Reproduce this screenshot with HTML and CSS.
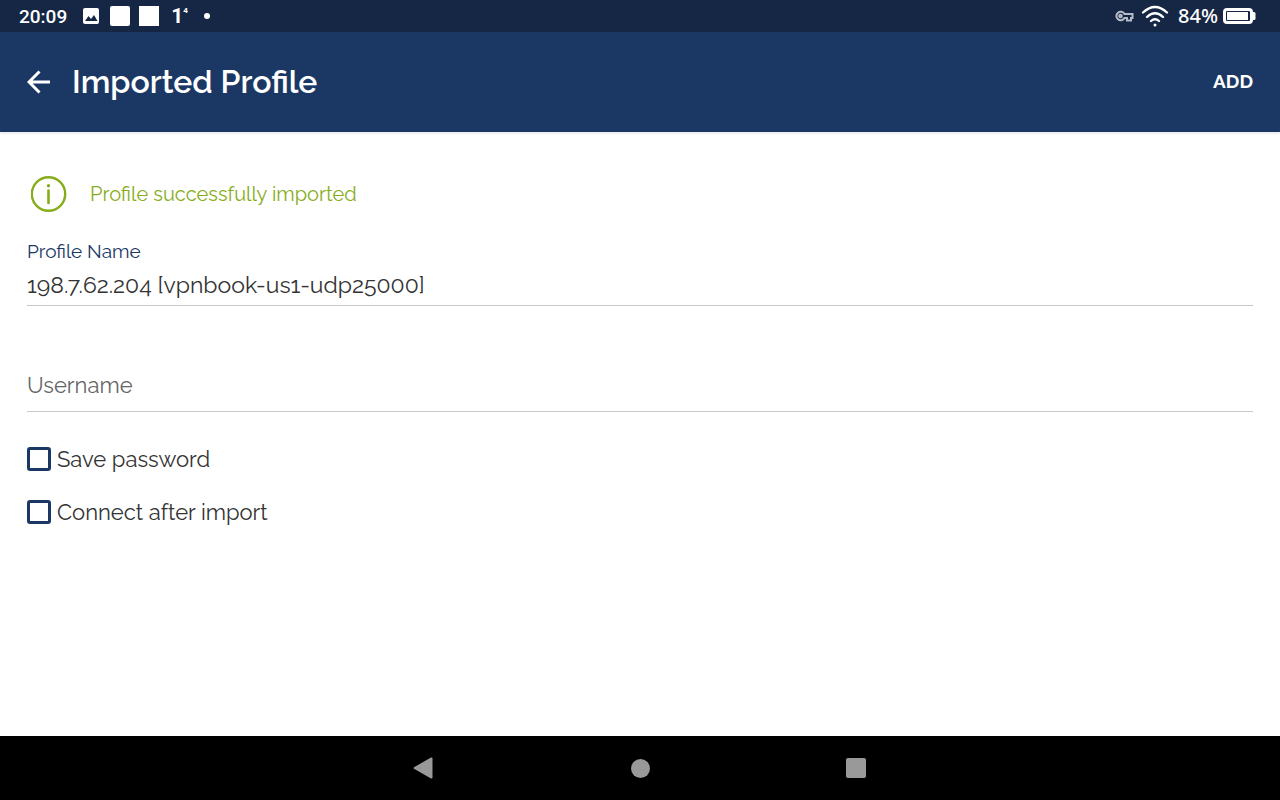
FILE: index.html
```html
<!DOCTYPE html>
<html lang="en">
  <head>
    <meta charset="UTF-8" />
    <meta name="viewport" content="width=device-width, initial-scale=1.0" />
    <title>Imported Profile</title>
    <link rel="stylesheet" href="styles.css">
  </head>
  <body>
    <div class="status-bar">
      <div class="status-left">
        <span class="clock">20:09</span>
        <svg class="picture-icon" width="16" height="16" viewBox="0 0 16 16">
          <rect width="16" height="16" rx="2" fill="#fff" />
          <path d="M2 13l3.500-5 2.500 3 3-4 3.500 6z" fill="#152744" />
        </svg>
        <span class="block rounded"></span>
        <span class="block"></span>
        <span class="counter">1<sup>4</sup></span>
        <span class="dot"></span>
      </div>
      <div class="status-right">
        <svg width="19" height="12" viewBox="0 0 19 12" fill="none" stroke="#b5bcc8" stroke-width="2">
          <path d="M9.500 4A4.300 4.300 0 1 0 9.500 8H12v2.500h4V8h1.500V4z" />
          <circle cx="5.500" cy="6" r="1.300" />
        </svg>
        <svg class="wifi-icon" width="28" height="22" viewBox="0 0 28 22" fill="none" stroke="#fff" stroke-width="2.300" stroke-linecap="round">
          <path d="M2 7.500Q14-3.500 26 7.500M6 12Q14 4.500 22 12M10 16Q14 12.500 18 16" />
          <circle cx="14" cy="20" r="1.500" fill="#fff" stroke="none" />
        </svg>
        <span class="battery-level">84%</span>
        <svg width="33" height="16" viewBox="0 0 33 16">
          <rect x="1.500" y="1.500" width="27" height="13" rx="2.500" fill="none" stroke="#fff" stroke-width="3" />
          <rect x="4" y="4" width="21" height="8" fill="#fff" />
          <path d="M30 4h1a1.500 1.500 0 0 1 1.500 1.500v5A1.500 1.500 0 0 1 31 12h-1z" fill="#fff" />
        </svg>
      </div>
    </div>

    <header class="app-bar">
      <button class="back-btn" type="button" aria-label="Back">
        <svg width="24" height="24" viewBox="0 0 24 24" fill="none" stroke="#fff" stroke-width="3">
          <path d="M23 12H2M12.500 1.500L2 12l10.500 10.500" />
        </svg>
      </button>
      <h1>Imported Profile</h1>
      <button class="add-btn" type="submit" form="profile-form">ADD</button>
    </header>

    <main>
      <div class="notice">
        <svg width="36" height="36" viewBox="0 0 36 36">
          <circle cx="17.500" cy="18" r="16.700" fill="none" stroke="#86ad1b" stroke-width="2.400" />
          <circle cx="17.500" cy="9.700" r="1.700" fill="#86ad1b" />
          <path d="M17.500 14.500v12.500" stroke="#86ad1b" stroke-width="2.600" stroke-linecap="round" />
        </svg>
        <span>Profile successfully imported</span>
      </div>

      <form id="profile-form">
        <div class="field">
          <label for="profile-name">Profile Name</label>
          <input type="text" id="profile-name" value="198.7.62.204 [vpnbook-us1-udp25000]" />
        </div>
        <div class="field">
          <input type="text" id="username" placeholder="Username" aria-label="Username" />
        </div>
        <label class="check">
          <input type="checkbox" id="save-password" />
          <span>Save password</span>
        </label>
        <label class="check">
          <input type="checkbox" id="connect-after" />
          <span>Connect after import</span>
        </label>
      </form>
    </main>

    <nav class="nav-bar">
      <button type="button" aria-label="Back">
        <svg width="22" height="22" viewBox="0 0 22 22" fill="#999">
          <path d="M1 10.200L18 .600Q19.500 0 19.500 1.500V20.500Q19.500 22 18 21.400L1 11.800Q0 11 1 10.200z" />
        </svg>
      </button>
      <button type="button" aria-label="Home">
        <svg width="20" height="20" viewBox="0 0 20 20" fill="#999">
          <circle cx="10.500" cy="10.500" r="9.500" />
        </svg>
      </button>
      <button type="button" aria-label="Recent apps">
        <svg width="20" height="20" viewBox="0 0 20 20" fill="#999">
          <rect width="20" height="20" rx="2" />
        </svg>
      </button>
    </nav>
  </body>
</html>
```
FILE: styles.css
```css
* {
  box-sizing: border-box;
}
body {
  margin: 0;
  min-height: 100vh;
  display: flex;
  flex-direction: column;
  font-family: Raleway, Lato, sans-serif;
  color: #333;
  background-color: #fff;
}
button {
  padding: 0;
  border: none;
  background: none;
  color: inherit;
  font-family: inherit;
  cursor: pointer;
}
svg {
  display: block;
}

/* status bar */
.status-bar {
  display: flex;
  justify-content: space-between;
  align-items: center;
  height: 32px;
  padding: 0 24px 0 19px;
  background-color: #152744;
  color: #fff;
}
.status-left,
.status-right {
  display: flex;
  align-items: center;
}
.clock {
  font: 500 19px Roboto, sans-serif;
}
.picture-icon {
  margin: 0 11px 0 16px;
}
.block {
  width: 20px;
  height: 20px;
  margin-right: 9px;
  background-color: #fff;
}
.rounded {
  border-radius: 2px;
}
.counter {
  display: flex;
  margin: 0 16px 0 3px;
  font: 700 21px/22px Roboto, sans-serif;
}
.counter sup {
  font-size: 8px;
  line-height: 12px;
}
.dot {
  width: 6px;
  height: 6px;
  border-radius: 50%;
  background-color: #fff;
}
.wifi-icon {
  margin: 0 9px 0 7px;
}
.battery-level {
  margin-right: 5px;
  font: 500 20px/24px "Noto Sans", sans-serif;
}

/* app bar */
.app-bar {
  display: flex;
  align-items: center;
  height: 100px;
  padding: 0 27px;
  background-color: #1b3865;
  color: #fff;
  box-shadow: 0 1px 3px rgba(0, 0, 0, 0.12);
}
.app-bar h1 {
  flex: 1;
  margin: 0 0 0 21px;
  padding-bottom: 2px;
  font-size: 32px;
  font-weight: 600;
}
.add-btn {
  padding-bottom: 2px;
  font-size: 19px;
  font-weight: 700;
}

/* content */
main {
  flex: 1;
  padding: 44px 27px;
}
.notice {
  display: flex;
  align-items: center;
  gap: 23px;
  height: 36px;
  margin: 0 0 26px 4px;
  font-size: 20px;
  color: #86ad1b;
}
.field {
  margin-bottom: 54px;
}
.field + .check {
  margin-top: -19px;
}
.field label {
  display: block;
  margin-bottom: 2px;
  font-size: 19px;
  line-height: 26px;
  color: #1b3865;
}
.field input {
  display: block;
  width: 100%;
  height: 40px;
  padding: 0 0 2px;
  border: none;
  border-bottom: 1px solid #c8c8c8;
  outline: none;
  font-family: inherit;
  font-size: 23px;
  color: #333;
  background: none;
}
.field #username {
  height: 52px;
  font-size: 22px;
}
.field input::placeholder {
  color: #666;
}
.check {
  display: flex;
  align-items: center;
  gap: 6px;
  height: 24px;
  margin-bottom: 29px;
  font-size: 22px;
}
.check input {
  appearance: none;
  width: 24px;
  height: 24px;
  margin: 0;
  border: 3px solid #1b3865;
  border-radius: 3px;
}
.check input:checked {
  background-color: #1b3865;
}

/* navigation bar */
.nav-bar {
  display: flex;
  justify-content: center;
  height: 64px;
  background-color: #000;
}
.nav-bar button {
  display: flex;
  justify-content: center;
  align-items: center;
  width: 216px;
}
```
